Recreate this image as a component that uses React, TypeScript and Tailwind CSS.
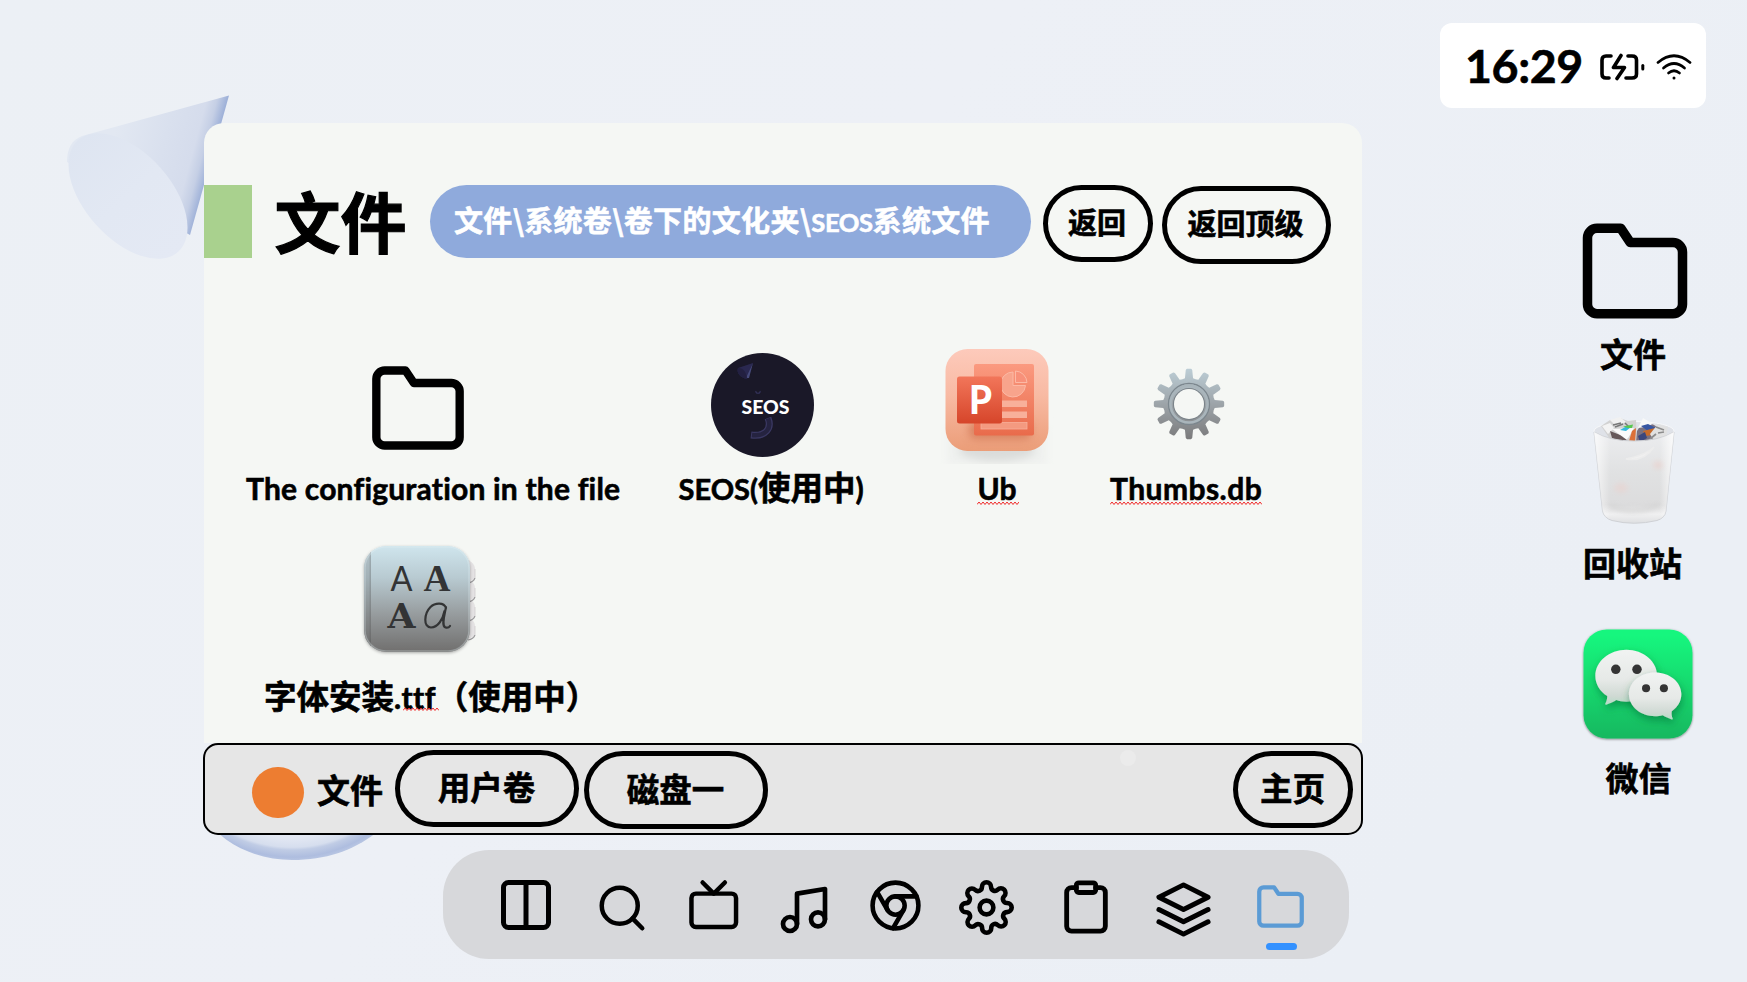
import type { ReactNode } from "react";
import {
  FiChrome,
  FiClipboard,
  FiColumns,
  FiFolder,
  FiLayers,
  FiMusic,
  FiSearch,
  FiSettings,
  FiTv,
} from "react-icons/fi";

function Wallpaper() {
  return (
    <svg className="absolute inset-0" width="1747" height="982" viewBox="0 0 1747 982">
      <defs>
        <linearGradient id="cone" gradientUnits="userSpaceOnUse" x1="110" y1="150" x2="207" y2="176">
          <stop offset="0" stopColor="#e2e8f2" />
          <stop offset="0.5" stopColor="#d9e0ee" />
          <stop offset="0.8" stopColor="#d5dcec" />
          <stop offset="0.9" stopColor="#c5cfe5" />
          <stop offset="1" stopColor="#9db0d8" />
        </linearGradient>
        <linearGradient id="mouth" x1="0" y1="0" x2="1" y2="0">
          <stop offset="0" stopColor="#dee5f1" />
          <stop offset="0.5" stopColor="#e2e8f3" />
          <stop offset="1" stopColor="#e4e9f4" />
        </linearGradient>
        <radialGradient id="ring" gradientUnits="userSpaceOnUse" cx="292" cy="718" r="142">
          <stop offset="0.84" stopColor="#e3e8f3" />
          <stop offset="0.91" stopColor="#d6deee" />
          <stop offset="0.93" stopColor="#c0cce5" />
          <stop offset="0.98" stopColor="#aebddf" />
          <stop offset="1" stopColor="#b6c4e2" />
        </radialGradient>
        <linearGradient id="sky" x1="0" y1="0" x2="1" y2="0.4">
          <stop offset="0" stopColor="#ecf0f5" />
          <stop offset="0.5" stopColor="#edf0f6" />
          <stop offset="1" stopColor="#ebeff5" />
        </linearGradient>
      </defs>
      <rect width="1747" height="982" fill="url(#sky)" />
      <path d="M229 95.500 L82 136 C72 140 67 148 67 162 L128 200 L190 235 Z" fill="url(#cone)" />
      <ellipse cx="128" cy="196" rx="75" ry="43" transform="rotate(48 128 196)" fill="url(#mouth)" />
      <path d="M204 816 C222 845 258 860 292 860 C326 860 352 851 376 833 Z" fill="url(#ring)" />
    </svg>
  );
}

function Squiggle({ width, className }: { width: number; className: string }) {
  let d = "M0 3.500";
  for (let x = 2; x <= width; x += 2) d += ` L${x} ${(x / 2) % 2 ? 1 : 3.5}`;
  return (
    <svg className={`absolute ${className}`} width={width} height="5">
      <path d={d} fill="none" stroke="#f02a2a" strokeWidth="1" />
    </svg>
  );
}

function PillButton({ children, className }: { children: ReactNode; className: string }) {
  return (
    <button
      className={`flex shrink-0 items-center justify-center rounded-full border-[5px] border-black font-bold leading-none whitespace-nowrap ${className}`}
    >
      {children}
    </button>
  );
}

function SeosIcon() {
  return (
    <svg width="104" height="105" viewBox="0 0 104 105">
      <ellipse cx="51.500" cy="52" rx="51.500" ry="52" fill="#1a1828" />
      <path d="M42 10 L27 15 C25 20 30 25 36 26 Z" fill="#2a2850" />
      <path d="M42 10 L35 25 L38 25 Z" fill="#474b7c" />
      <path d="M27 15 C32 14 36 20 36 26 C30 25 25 20 27 15" fill="#232041" />
      <path d="M45 38 C44 41 50 41 49 38" fill="none" stroke="#35335c" strokeWidth="1.200" />
      <path d="M57 65 C61 75 55 84 40 82" fill="none" stroke="#3a3862" strokeWidth="7" />
      <path d="M57 65.500 C61 75 55 83.500 41 82" fill="none" stroke="#252340" strokeWidth="4.500" />
      <text x="30.500" y="60.500" fontFamily="Lato, sans-serif" fontWeight="900" fontSize="18.500" textLength="48" lengthAdjust="spacingAndGlyphs" fill="#fff">
        SEOS
      </text>
    </svg>
  );
}

function PowerPointIcon() {
  return (
    <svg width="120" height="124" viewBox="0 0 120 124">
      <defs>
        <linearGradient id="pp-bg" x1="0" y1="0" x2="0" y2="1">
          <stop offset="0" stopColor="#fdcabb" />
          <stop offset="0.45" stopColor="#f8baa3" />
          <stop offset="1" stopColor="#eb9d78" />
        </linearGradient>
        <linearGradient id="pp-page" x1="0" y1="0" x2="0" y2="1">
          <stop offset="0" stopColor="#fb9a80" />
          <stop offset="1" stopColor="#e96b4b" />
        </linearGradient>
        <linearGradient id="pp-p" x1="0" y1="0" x2="0" y2="1">
          <stop offset="0" stopColor="#f2765a" />
          <stop offset="1" stopColor="#d6452a" />
        </linearGradient>
        <filter id="pp-blur" x="-30%" y="-60%" width="160%" height="220%">
          <feGaussianBlur stdDeviation="4" />
        </filter>
        <clipPath id="pp-clip">
          <rect x="3" y="0" width="114" height="119" />
        </clipPath>
      </defs>
      <g clipPath="url(#pp-clip)">
        <rect x="10" y="80" width="100" height="40" fill="#eff1ef" filter="url(#pp-blur)" />
        <ellipse cx="60" cy="105" rx="38" ry="11" fill="#dadcda" filter="url(#pp-blur)" />
      </g>
      <rect x="8.500" y="4" width="103" height="102" rx="22" fill="url(#pp-bg)" />
      <rect x="32" y="76" width="62" height="18" rx="6" fill="#c96c4a" opacity="0.6" filter="url(#pp-blur)" />
      <rect x="37" y="19" width="60" height="71.500" rx="2" fill="url(#pp-page)" />
      <path d="M76 27 A12.500 12.500 0 1 0 88.500 40.500 L76 40.500 Z" fill="#f8a48c" stroke="#fcb9a5" strokeWidth="1" />
      <path d="M78.500 26 A12 12 0 0 1 90 37.500 L78.500 37.500 Z" fill="#f8917a" stroke="#fcb9a5" strokeWidth="1" />
      <rect x="60" y="55.500" width="30" height="6.500" fill="#f8b09a" />
      <rect x="60" y="66.500" width="30" height="6.500" fill="#f8b09a" />
      <rect x="44" y="77.500" width="46" height="6.500" fill="#f49a80" stroke="#f8b09a" strokeWidth="0.800" />
      <rect x="20" y="31.500" width="45" height="47" rx="2.500" fill="url(#pp-p)" />
      <text x="32" y="69" fontFamily="Lato, sans-serif" fontWeight="900" fontSize="40" textLength="23" lengthAdjust="spacingAndGlyphs" fill="#fff">
        P
      </text>
    </svg>
  );
}

function GearIcon() {
  const teeth = Array.from({ length: 12 }, (_, i) => i * 30);
  return (
    <svg width="72" height="72" viewBox="-36 -36 72 72">
      <defs>
        <linearGradient id="gear" gradientUnits="userSpaceOnUse" x1="0" y1="-35" x2="0" y2="35">
          <stop offset="0" stopColor="#bccdd5" />
          <stop offset="0.45" stopColor="#a0a8ad" />
          <stop offset="1" stopColor="#7b7b7c" />
        </linearGradient>
        <mask id="gear-hole">
          <rect x="-36" y="-36" width="72" height="72" fill="#fff" />
          <circle r="15" fill="#000" />
        </mask>
      </defs>
      <g mask="url(#gear-hole)">
        <path
          fill="url(#gear)"
          d={teeth
            .map((a) => {
              const p = (r: number, off: number) => {
                const t = ((a + off) * Math.PI) / 180;
                return `${(r * Math.sin(t)).toFixed(2)} ${(-r * Math.cos(t)).toFixed(2)}`;
              };
              return `${a === 0 ? "M" : "L"}${p(25.5, -15)} L${p(26, -9)} L${p(34, -5.5)} Q${p(35.6, -4)} ${p(35.2, -2.5)} L${p(35.2, 2.5)} Q${p(35.6, 4)} ${p(34, 5.5)} L${p(26, 9)}`;
            })
            .join(" ") + "Z"}
        />
        <circle r="20.500" fill="none" stroke="#7c878e" strokeWidth="1.300" />
        <circle r="18.500" fill="none" stroke="#a9b5bb" strokeWidth="2.500" />
        <circle r="15.300" fill="none" stroke="#7a8389" strokeWidth="1.500" />
      </g>
    </svg>
  );
}

function FontBookIcon() {
  return (
    <svg width="124" height="124" viewBox="0 0 124 124">
      <defs>
        <linearGradient id="fb" x1="0" y1="0" x2="0" y2="1">
          <stop offset="0" stopColor="#cfe5ed" />
          <stop offset="0.3" stopColor="#b8cad1" />
          <stop offset="0.65" stopColor="#969b9d" />
          <stop offset="1" stopColor="#706f6e" />
        </linearGradient>
        <filter id="fb-shadow" x="-10%" y="-10%" width="120%" height="125%">
          <feDropShadow dx="0" dy="1" stdDeviation="1.500" floodOpacity="0.3" />
        </filter>
        <clipPath id="fb-clip">
          <rect x="8" y="4" width="106" height="106" rx="22" />
        </clipPath>
      </defs>
      {[72, 53, 34, 15].map((y) => (
        <g key={y}>
          <path d={`M104 ${y} Q119 ${y + 4} 119 ${y + 12} V${y + 20} Q118 ${y + 25} 104 ${y + 26} Z`} fill="#e4e2e3" />
          <path d={`M119 ${y + 21} Q117.500 ${y + 25} 112 ${y + 26}`} fill="none" stroke="#9b9a9c" strokeWidth="1.200" />
          <path d={`M119 ${y + 12} V${y + 21}`} fill="none" stroke="#cfcdce" strokeWidth="0.800" />
        </g>
      ))}
      <g filter="url(#fb-shadow)">
        <rect x="8" y="4" width="106" height="106" rx="22" fill="url(#fb)" />
        <g clipPath="url(#fb-clip)">
          <rect x="8" y="4" width="7" height="106" fill="#555" opacity="0.22" />
          <rect x="13.500" y="4" width="1.500" height="106" fill="#444" opacity="0.15" />
          <rect x="9" y="5" width="104" height="104" rx="21" fill="none" stroke="#e3f1f6" strokeOpacity="0.3" strokeWidth="1.500" />
        </g>
      </g>
      <g fill="#333435" textAnchor="middle">
        <text x="45.500" y="49" fontFamily="Lato, sans-serif" fontWeight="400" fontSize="35" textLength="22" lengthAdjust="spacingAndGlyphs">A</text>
        <text x="81" y="49" fontFamily="'Liberation Serif', serif" fontWeight="700" fontSize="38" textLength="27" lengthAdjust="spacingAndGlyphs">A</text>
        <text x="45.500" y="85.500" fontFamily="'DejaVu Serif', serif" fontWeight="700" fontSize="34" textLength="28" lengthAdjust="spacingAndGlyphs">A</text>
      </g>
      <path d="M90 66 C88 60 79 60.500 74.500 65 C68 71.500 67 85.500 75 85.500 C82 85.500 87 77 88.500 69 M90 65 C88.500 73 85 84 89.500 85.500 C91.500 86 93 85.500 94 84" fill="none" stroke="#333435" strokeWidth="2.200" strokeLinecap="round" />
    </svg>
  );
}

function TrashIcon() {
  return (
    <svg width="90" height="114" viewBox="0 0 90 114">
      <defs>
        <linearGradient id="bin" x1="0" y1="0" x2="0" y2="1">
          <stop offset="0" stopColor="#ecedef" />
          <stop offset="0.45" stopColor="#e0e1e2" />
          <stop offset="0.8" stopColor="#dcdcdd" />
          <stop offset="0.9" stopColor="#f0f0f1" />
          <stop offset="1" stopColor="#dedfe1" />
        </linearGradient>
        <linearGradient id="bin-side" x1="0" y1="0" x2="1" y2="0">
          <stop offset="0" stopColor="#fff" stopOpacity="0.75" />
          <stop offset="0.2" stopColor="#fff" stopOpacity="0" />
          <stop offset="0.82" stopColor="#fff" stopOpacity="0" />
          <stop offset="1" stopColor="#fff" stopOpacity="0.8" />
        </linearGradient>
        <filter id="bin-soft" x="-80%" y="-80%" width="260%" height="260%">
          <feGaussianBlur stdDeviation="2.500" />
        </filter>
      </defs>
      <ellipse cx="44" cy="17" rx="40" ry="9.500" fill="#dfe2e8" stroke="#f7f8fa" strokeWidth="1" />
      <path d="M11 12 L20 6 L28 8 L30 4 L38 7 L46 6 L47 28 L22 28 Z" fill="#d2d2d2" />
      <path d="M12 12 L20 9 L24 14 L18 20 Z" fill="#f3f3f3" />
      <path d="M20 6 L30 3 L36 8 L26 12 Z" fill="#f1f1f1" />
      <path d="M23 11 L31 9 M25 13 L33 10 M35 9 L39 13" stroke="#777" strokeWidth="1.500" />
      <path d="M20 17 L38 24 L35 29 L22 24 Z" fill="#66585a" />
      <path d="M22 15 L44 14 L37 26 Z" fill="#fafafa" />
      <path d="M30 16 L37 12 L41 13 L36 17 Z" fill="#35b8dd" />
      <path d="M33 12.500 L43 10.500 L42 14 L38 14 Z" fill="#57c84f" />
      <path d="M42 17 L46 14 L45 29 L39 27 Z" fill="#db7038" />
      <path d="M47 17 L54 6 L64 11 L72 16 L63 26 L46 29 Z" fill="#7a7180" />
      <path d="M48 14 L53 4 L63 10 L55 13 Z" fill="#f8f8f8" />
      <path d="M51 12 L58 10 L66 14 L58 17 Z" fill="#3756a2" />
      <path d="M53 17 L65 14 L63 21 L55 22 Z" fill="#c86b2a" />
      <path d="M48 22 L55 18 L57 24 L50 28 Z" fill="#3c477c" />
      <path d="M60 20 L68 10 L78 13 L76 23 L64 27 Z" fill="#e1e1e1" />
      <path d="M66 13 L74 16 M68 19 L74 18 M60 25 L66 20" stroke="#8d8d8d" strokeWidth="1.700" />
      <path d="M4 18 Q20 27 44 27 Q68 27 84 18 L76 97 Q75 104 67 106.500 Q44 112 22 106.500 Q14 104 12.500 97 Z" fill="url(#bin)" stroke="#cfd1d5" strokeWidth="1" />
      <path d="M4 18 Q20 27 44 27 Q68 27 84 18 L76 97 Q75 104 67 106.500 Q44 112 22 106.500 Q14 104 12.500 97 Z" fill="url(#bin-side)" />
      <path d="M36 45 Q54 48 64 33 Q56 41 36 45" fill="#f0f0f0" stroke="#ececec" strokeWidth="1.500" />
      <ellipse cx="31" cy="74" rx="7" ry="5" fill="#f1c9c2" opacity="0.35" filter="url(#bin-soft)" />
      <ellipse cx="68" cy="51" rx="5" ry="4" fill="#f1c0b5" opacity="0.35" filter="url(#bin-soft)" />
      <path d="M20 92 Q44 102 69 91" fill="none" stroke="#cfcfcf" strokeWidth="5" opacity="0.6" filter="url(#bin-soft)" />
    </svg>
  );
}

function WeChatIcon() {
  return (
    <svg width="117" height="119" viewBox="0 0 116 118">
      <defs>
        <linearGradient id="wc" x1="0" y1="0" x2="0" y2="1">
          <stop offset="0.05" stopColor="#17f67e" />
          <stop offset="0.45" stopColor="#18dd70" />
          <stop offset="1" stopColor="#18b860" />
        </linearGradient>
        <linearGradient id="wc-bubble" x1="0" y1="0" x2="0" y2="1">
          <stop offset="0" stopColor="#f1f3f2" />
          <stop offset="0.55" stopColor="#e6e9e7" />
          <stop offset="0.85" stopColor="#cfd9d3" />
          <stop offset="1" stopColor="#b4dcc5" />
        </linearGradient>
        <filter id="wc-shadow" x="-20%" y="-20%" width="150%" height="150%">
          <feDropShadow dx="1" dy="4" stdDeviation="4" floodColor="#046b36" floodOpacity="0.55" />
        </filter>
        <filter id="wc-out" x="-10%" y="-10%" width="120%" height="120%">
          <feDropShadow dx="0" dy="0.700" stdDeviation="1" floodOpacity="0.5" />
        </filter>
      </defs>
      <rect x="3.500" y="2.500" width="108" height="108" rx="23" fill="url(#wc)" filter="url(#wc-out)" />
      <g filter="url(#wc-shadow)">
        <path d="M46 22.500 C63 22.500 76.500 34 76.500 48.500 C76.500 63 63 74 46 74 C42 74 39 73.500 36 72.500 C33 74.500 29 76 26 77 C25.500 77 24.800 76.500 25 76 C26.500 73.500 27 71 27 68.500 C19.500 63.500 15.200 56.500 15.200 48.500 C15.200 34 29 22.500 46 22.500" fill="url(#wc-bubble)" />
      </g>
      <g filter="url(#wc-shadow)">
        <path d="M74.500 45 C89 45 100.500 54.500 100.500 66.500 C100.500 73.500 97 79.500 91 83.500 C90.500 86 91 88.500 92 91 C92 91.700 91.500 92 91 91.700 C88 90.700 84.500 89 82 87.500 C79.500 88.300 77 88.500 74.500 88.500 C60 88.500 48.500 79 48.500 66.500 C48.500 54.500 60 45 74.500 45" fill="url(#wc-bubble)" />
      </g>
      <g fill="#343434">
        <circle cx="35.500" cy="42" r="4.700" />
        <circle cx="56.500" cy="42" r="4.700" />
        <circle cx="65.500" cy="60.700" r="4" />
        <circle cx="83.200" cy="60.700" r="4" />
      </g>
    </svg>
  );
}

function StatusCard() {
  return (
    <div className="ml-[77px] flex h-[85px] w-[266px] shrink-0 items-center rounded-xl bg-white pt-0.5">
      <span className="mt-[-2px] ml-[25px] inline-block w-[117px] font-[Lato] text-[46.500px] leading-none font-bold tracking-[-0.4px] [-webkit-text-stroke:0.6px_black]">
        16:29
      </span>
      <svg className="ml-[17px] shrink-0" width="46" height="28" viewBox="0 0 46 28" fill="none" stroke="#000" strokeWidth="3.600" strokeLinecap="round" strokeLinejoin="round">
        <path d="M12 3 H7 Q3 3 3 7 V21 Q3 25 7 25 H10" />
        <path d="M29 3 H33 Q37.500 3 37.500 7 V21 Q37.500 25 33 25 H27" />
        <path d="M22 2.500 L14.500 14.500 H25.500 L18 25.500" />
        <path d="M43.800 12.500 V16" strokeWidth="3" />
      </svg>
      <svg className="ml-[10px] shrink-0" width="38" height="28" viewBox="0 0 38 28" fill="none" stroke="#000" strokeWidth="2.700" strokeLinecap="round">
        <path d="M3 9.500 Q19 -4 35 9.500" />
        <path d="M8.500 15 Q19 6 29.500 15" />
        <path d="M13.500 20 Q19 15.500 24.500 20" />
        <circle cx="19" cy="25" r="1.500" fill="#000" stroke="none" />
      </svg>
    </div>
  );
}

function FileWindow() {
  return (
    <section className="w-[1160px] shrink-0">
      <div className="mx-px h-[620px] rounded-t-[20px] bg-[#f5f7f4] pt-[62px]">
        <header className="flex h-[80px] items-start">
          <div className="h-[73px] w-12 shrink-0 bg-[#a9d18e]" />
          <h1 className="mt-[-2px] ml-[22.500px] w-[133.500px] shrink-0 text-[66px] leading-[73px] font-bold whitespace-nowrap [-webkit-text-stroke:1.2px_black]">
            文件
          </h1>
          <div className="ml-[22px] flex h-[73px] w-[601px] shrink-0 items-center rounded-full bg-[#8faadc] pl-[24px] text-[29px] leading-none font-bold tracking-[0.33px] whitespace-nowrap text-white">
            <span className="mt-[-2px]">
              文件\系统卷\卷下的文化夹\<span className="font-[Lato] text-[25.500px] tracking-[-0.4px]">SEOS</span>系统文件
            </span>
          </div>
          <PillButton className="ml-3 h-[77px] w-[110px] pr-0.5 pb-[5px] text-[29px]">返回</PillButton>
          <PillButton className="mt-px ml-[9px] h-[78px] w-[169px] pr-0.5 pb-[5px] text-[29px]">返回顶级</PillButton>
        </header>

        <div className="mt-[80px] ml-[42px] flex h-[164px] text-[32.500px] leading-[38px] font-bold whitespace-nowrap">
          <div className="w-[374px]">
            <div className="flex h-[124px] pt-[12.500px] pl-[122px]">
              <FiFolder size={100} />
            </div>
            <div className="font-[Lato] text-[30px] tracking-[0.2px]">The configuration in the file</div>
          </div>
          <div className="ml-[59px] w-[187px]">
            <div className="flex h-[122px] pt-[8px] pl-[32px]">
              <SeosIcon />
            </div>
            <div className="ml-[-0.500px]">
              <span className="font-[Lato] text-[29px]">SEOS(</span>使用中<span className="font-[Lato] text-[30px]">)</span>
            </div>
          </div>
          <div className="ml-[71px] w-[120px]">
            <div className="h-[124px]">
              <PowerPointIcon />
            </div>
            <div className="relative text-center font-[Lato] text-[30px]">
              Ub
              <Squiggle width={42} className="top-[32px] left-[40px]" />
            </div>
          </div>
          <div className="ml-[53px] w-[154px]">
            <div className="flex h-[124px] pt-[23px] pl-[43px]">
              <GearIcon />
            </div>
            <div className="relative font-[Lato] text-[30px] tracking-[0.45px]">
              Thumbs.db
              <Squiggle width={152} className="top-[32px] left-0" />
            </div>
          </div>
        </div>

        <div className="mt-[32.500px] ml-[60px] w-[330px] text-[32.500px] font-bold whitespace-nowrap">
          <div className="h-[131.500px] pl-[92px]">
            <FontBookIcon />
          </div>
          <div className="relative leading-[44px]">
            字体安装<span className="font-[Lato] text-[30px] tracking-[0.4px]">.ttf</span>（使用中）
            <Squiggle width={36} className="top-[34px] left-[139px]" />
          </div>
        </div>
      </div>

      <footer className="flex h-[92px] items-start rounded-[15px] border-2 border-black bg-[#e6e6e6] text-[32.500px] font-bold">
        <div className="mt-[22px] ml-[47px] h-[51px] w-[52px] shrink-0 rounded-full bg-[#ed7d31]" />
        <span className="mt-[24px] ml-[13px] w-[66px] text-[33px] leading-[40px] whitespace-nowrap">文件</span>
        <PillButton className="mt-[5px] ml-3 h-[77px] w-[184px] pr-px pb-[5px]">用户卷</PillButton>
        <PillButton className="mt-[6px] ml-[5px] h-[78px] w-[184px] pr-px pb-[3px]">磁盘一</PillButton>
        <div className="mt-[4.500px] ml-[352px] size-4 shrink-0 rounded-full bg-[#ebebeb]" />
        <PillButton className="mt-[6px] ml-[97px] h-[77px] w-[120px] pr-px pb-[5px]">主页</PillButton>
      </footer>
    </section>
  );
}

function Dock() {
  return (
    <nav className="mt-[15px] ml-[240px] flex h-[109px] w-[906px] shrink-0 items-start rounded-[46px] bg-[#d7d8db]">
      <FiColumns size={60} className="mt-[25px] ml-[53px] shrink-0" />
      <FiSearch size={54} className="mt-[30.500px] ml-[38.500px] shrink-0" />
      <FiTv size={53.5} className="mt-[27.500px] ml-[38px] shrink-0" />
      <FiMusic size={56} className="mt-[32px] ml-[35.500px] shrink-0" />
      <FiChrome size={55} className="mt-[28px] ml-[36px] shrink-0" />
      <FiSettings size={55} className="mt-[29.500px] ml-[36px] shrink-0" />
      <FiClipboard size={58} className="mt-[27.500px] ml-[43px] shrink-0" />
      <FiLayers size={59} className="mt-[29.500px] ml-[39px] shrink-0" />
      <div className="mt-[30.500px] ml-[42.500px] flex w-[51px] shrink-0 flex-col items-center text-[#5b9bd5]">
        <FiFolder size={51} />
        <div className="mt-[11.500px] ml-[2px] h-[7px] w-[31px] rounded-full bg-[#3391ff]" />
      </div>
    </nav>
  );
}

function Shortcuts() {
  return (
    <aside className="flex flex-col pl-[215px] text-[33px] leading-[40px] font-bold whitespace-nowrap">
      <FiFolder size={114} className="mt-[105.500px]" />
      <span className="mt-[5px] ml-[22px]">文件</span>
      <div className="mt-[41px] ml-[12px]">
        <TrashIcon />
      </div>
      <span className="mt-[14px] ml-[5px]">回收站</span>
      <div className="mt-[45px] ml-[1.500px]">
        <WeChatIcon />
      </div>
      <span className="mt-[11.500px] ml-[27.500px]">微信</span>
    </aside>
  );
}

export default function App() {
  return (
    <div className="relative h-[982px] w-[1747px] overflow-hidden bg-[#eceff6] font-['Noto_Sans_CJK_SC',sans-serif] text-black [-webkit-text-stroke:0.6px_currentColor]">
      <Wallpaper />
      <div className="relative flex h-full">
        <main className="flex w-[1363px] shrink-0 flex-col pt-[123px] pl-[203px]">
          <FileWindow />
          <Dock />
        </main>
        <div className="flex w-[384px] flex-col pt-[23px]">
          <StatusCard />
          <Shortcuts />
        </div>
      </div>
    </div>
  );
}
